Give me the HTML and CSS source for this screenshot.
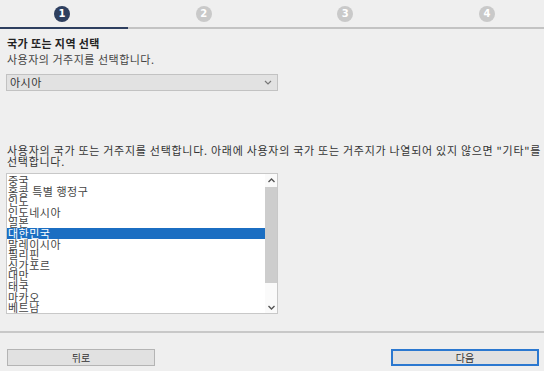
FILE: index.html
```html
<!DOCTYPE html>
<html>
<head>
	<title>국가 또는 지역 선택</title>
	<meta charset="utf-8" />
	<link rel="stylesheet" href="styles.css">
</head>
<body>
	<div class="steps">
		<span class="step active">1</span>
		<span class="step">2</span>
		<span class="step">3</span>
		<span class="step">4</span>
	</div>
	<div class="progress"><div class="done"></div></div>

	<div class="content">
		<h3 class="title">국가 또는 지역 선택</h3>
		<p class="sub">사용자의 거주지를 선택합니다.</p>
		<div class="dropdown">
			<span>아시아</span>
			<svg width="8" height="5" viewBox="0 0 8 5"><path d="M1 1 L4 4 L7 1" fill="none" stroke="#777" stroke-width="1.2"/></svg>
		</div>

		<p class="desc">사용자의 국가 또는 거주지를 선택합니다. 아래에 사용자의 국가 또는 거주지가 나열되어 있지 않으면 <span class="nowrap">"기타"를</span> 선택합니다.</p>

		<div class="listbox">
			<ul class="items">
				<li>중국</li>
				<li>홍콩 특별 행정구</li>
				<li>인도</li>
				<li>인도네시아</li>
				<li>일본</li>
				<li class="selected">대한민국</li>
				<li>말레이시아</li>
				<li>필리핀</li>
				<li>싱가포르</li>
				<li>대만</li>
				<li>태국</li>
				<li>마카오</li>
				<li>베트남</li>
			</ul>
			<div class="scrollbar">
				<svg class="arrow" width="7" height="5" viewBox="0 0 7 5"><path d="M0.5 4 L3.5 1 L6.5 4" fill="none" stroke="#555" stroke-width="1.4"/></svg>
				<div class="track"><div class="thumb"></div></div>
				<svg class="arrow" width="7" height="5" viewBox="0 0 7 5"><path d="M0.5 1 L3.5 4 L6.5 1" fill="none" stroke="#555" stroke-width="1.4"/></svg>
			</div>
		</div>
	</div>

	<div class="footer">
		<button class="btn">뒤로</button>
		<button class="btn focused">다음</button>
	</div>
</body>
</html>
```

FILE: styles.css
```css
/* general styles */
* { box-sizing: border-box; }
body { margin: 0; background-color: #efefef; font-family: "Noto Sans CJK KR", "Noto Sans", sans-serif; font-size: 11px; color: #2a2a2a; width: 544px; height: 371px; overflow: hidden; }
p, h3, ul { margin: 0; padding: 0; }
.nowrap { white-space: nowrap; }

/* steps */
.steps { display: flex; justify-content: space-between; padding: 6px 49px 0 54px; height: 27px; }
.step { width: 16px; height: 16px; border-radius: 50%; background-color: #c9c9c9; color: #fff; font-family: "DejaVu Sans", sans-serif; font-weight: bold; font-size: 10px; line-height: 16px; text-align: center; }
.step.active { background-color: #2e3f5f; }
.progress { height: 2px; background-color: #c3c3c3; }
.progress .done { width: 128px; height: 2px; background-color: #2e3f5f; }

/* content */
.content { padding: 0 6px; }
.title { font-size: 11px; font-weight: bold; line-height: 13px; margin-top: 8px; padding-left: 1px; color: #222; letter-spacing: 0.4px; }
.sub { line-height: 13px; margin-top: 3px; padding-left: 1px; color: #444; letter-spacing: 0.5px; }
.dropdown { display: flex; align-items: center; justify-content: space-between; width: 272px; height: 17px; margin-top: 8px; padding: 0 5px 0 3px; background-color: #e2e2e2; border: 1px solid #c2c2c2; color: #333; line-height: 15px; letter-spacing: 0.5px; }
.desc { margin-top: 54px; margin-right: -5px; line-height: 11px; padding-left: 1px; color: #333; letter-spacing: 0.72px; }

/* listbox */
.listbox { display: flex; width: 272px; height: 141px; margin-top: 6px; background-color: #fff; border: 1px solid #c8c8c8; }
.items { flex: 1; list-style: none; overflow: hidden; padding-top: 1px; }
.items li { height: 10.6px; line-height: 10.6px; padding-left: 1px; color: #444; white-space: nowrap; letter-spacing: 0.5px; }
.items li.selected { background-color: #1b6ec2; color: #fff; }
.scrollbar { width: 12px; display: flex; flex-direction: column; align-items: center; padding: 4px 0 3px; background-color: #fafafa; }
.scrollbar .arrow { flex: none; }
.track { flex: 1; width: 100%; padding: 4px 0 22px; }
.thumb { height: 100%; background-color: #cdcdcd; }

/* footer */
.footer { display: flex; justify-content: space-between; margin-top: 17px; padding: 16px 5px 0 7px; border-top: 2px solid #c8c8c8; }
.btn { width: 148px; height: 17px; padding: 0; background-color: #e1e1e1; border: 1px solid #b4b4b4; font-family: "Noto Sans CJK KR", sans-serif; font-size: 10px; line-height: 15px; color: #333; }
.btn.focused { border: 2px solid #2b78d0; line-height: 13px; }
```
